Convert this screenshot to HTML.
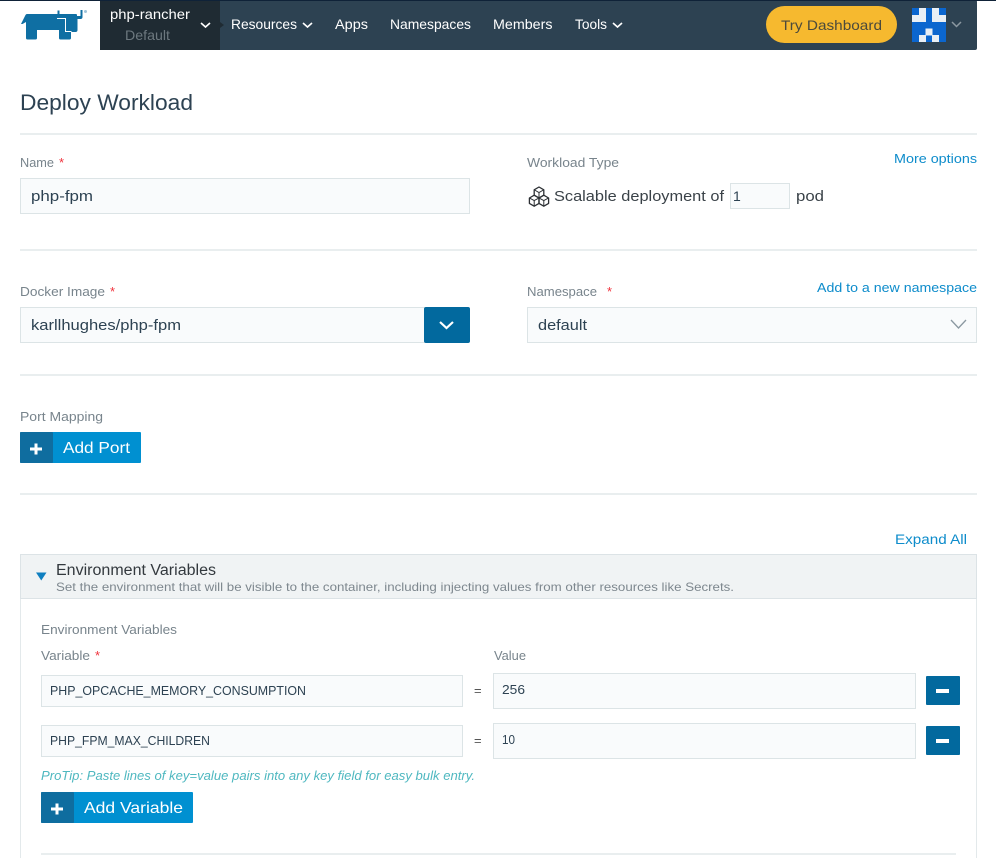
<!DOCTYPE html>
<html lang="en"><head><meta charset="utf-8"><title>Deploy Workload</title>
<style>
html,body{margin:0;padding:0;background:#fff;width:996px;height:858px;overflow:hidden}
svg{display:block}
text{font-family:"Liberation Sans",sans-serif;white-space:pre}
.lb{font-size:13px;fill:#78848c}
.in{fill:#f9fbfc;stroke:#dce4e6;stroke-width:1}
.v{font-size:15px;fill:#2d4252}
.lk{font-size:12.5px;fill:#0e8ccb}
.nav{font-size:14px;fill:#fff}
.rq{font-size:13px;fill:#f0323c}
.ln{fill:#e9eeef}
.ch{fill:none;stroke:#fff;stroke-width:1.6}
</style></head><body>
<svg width="996" height="858" viewBox="0 0 996 858" xmlns="http://www.w3.org/2000/svg">
<rect width="996" height="858" fill="#fff"/>
<!-- header -->
<rect x="100" y="0" width="877" height="50" rx="2" fill="#2d4252"/>
<rect x="0" y="0" width="996" height="1" fill="#0f2238"/>
<path d="M100 1H220L220 22L224 25L220 28V50H100Z" fill="#1f2b33"/>
<!-- logo -->
<path d="M21 24L25.500 15Q26 14 27 14H57.500V10.500H59.500V14H76Q77 14 77 15V16H80.500V10H82.500V17Q82.500 19 80.500 19H77.500V30Q77.500 32 75.500 32H71V38Q71 39.500 69.500 39.500H60.500Q59 39.500 59 38V30H37V38Q37 39.500 35.500 39.500H27.500Q26 39.500 26 38V22L22.500 24Z" fill="#0f6fa3"/>
<path d="M57 18.500H65.500V31.500H71.500" fill="none" stroke="#fff" stroke-width="1"/>
<circle cx="85.500" cy="11.500" r="1.500" fill="#9fc3d8"/>
<text x="110" y="19" class="nav" textLength="80" lengthAdjust="spacingAndGlyphs">php-rancher</text>
<text x="125" y="40" font-size="14" fill="#6d787f" textLength="45" lengthAdjust="spacingAndGlyphs">Default</text>
<path d="M201 23l4.500 4 4.500-4" class="ch"/>
<text x="231" y="29" class="nav" textLength="66" lengthAdjust="spacingAndGlyphs">Resources</text>
<path d="M303 23l4.500 4 4.500-4" class="ch"/>
<text x="335" y="29" class="nav" textLength="33" lengthAdjust="spacingAndGlyphs">Apps</text>
<text x="390" y="29" class="nav" textLength="81" lengthAdjust="spacingAndGlyphs">Namespaces</text>
<text x="493" y="29" class="nav" textLength="59.500" lengthAdjust="spacingAndGlyphs">Members</text>
<text x="575" y="29" class="nav" textLength="32" lengthAdjust="spacingAndGlyphs">Tools</text>
<path d="M613 23l4.500 4 4.500-4" class="ch"/>
<rect x="766" y="6" width="131" height="37" rx="18.500" fill="#f6b92f"/>
<text x="781" y="30" font-size="14" fill="#4b4a3c" textLength="101" lengthAdjust="spacingAndGlyphs">Try Dashboard</text>
<!-- avatar: 5x5 identicon -->
<rect x="912" y="8" width="34" height="34" fill="#0b66cf"/>
<g fill="#e9eff5">
<rect x="919" y="8" width="7" height="7"/>
<rect x="932" y="8" width="7" height="7"/>
<rect x="912" y="15" width="14" height="7"/>
<rect x="932" y="15" width="14" height="7"/>
<rect x="925.500" y="28.500" width="7" height="7"/>
<rect x="919" y="35" width="7" height="7"/>
<rect x="932" y="35" width="7" height="7"/>
</g>
<path d="M952 22l4.500 4.500 4.500-4.500" fill="none" stroke="#8b98a1" stroke-width="1.500"/>

<!-- title -->
<text x="20" y="110" font-size="22" fill="#2d4252" textLength="173" lengthAdjust="spacingAndGlyphs">Deploy Workload</text>
<rect class="ln" x="20" y="133" width="957" height="2"/>

<!-- name -->
<text x="20" y="167" class="lb" textLength="34" lengthAdjust="spacingAndGlyphs">Name</text>
<text x="59" y="167" class="rq">*</text>
<rect class="in" x="20.500" y="178.500" width="449" height="35"/>
<text x="31" y="201" class="v" textLength="62" lengthAdjust="spacingAndGlyphs">php-fpm</text>

<text x="527" y="167" class="lb" textLength="92" lengthAdjust="spacingAndGlyphs">Workload Type</text>
<text x="894" y="163" class="lk" textLength="83" lengthAdjust="spacingAndGlyphs">More options</text>
<g fill="none" stroke="#2b2f33" stroke-width="1.300" stroke-linejoin="round">
<path d="M539 187l4.800 2.800v5.400l-4.800 2.800-4.800-2.800v-5.400z"/>
<path d="M534.200 195.200l4.800 2.800v5.400l-4.800 2.800-4.800-2.800v-5.400z"/>
<path d="M543.800 195.200l4.800 2.800v5.400l-4.800 2.800-4.800-2.800v-5.400z"/>
<path d="M534.600 190l4.400 2.600 4.400-2.600M539 192.600v5.400M529.800 198.200l4.400 2.400 4.400-2.400M534.200 200.600v5M539.400 198.200l4.400 2.400 4.400-2.400M543.800 200.600v5" stroke-width="1"/>
</g>
<text x="554" y="201" font-size="15" fill="#3a4248" textLength="170" lengthAdjust="spacingAndGlyphs">Scalable deployment of</text>
<rect class="in" x="730.500" y="183.500" width="59" height="25"/>
<text x="733" y="201" font-size="14" fill="#2d4252">1</text>
<text x="796" y="201" font-size="15" fill="#3a4248" textLength="28" lengthAdjust="spacingAndGlyphs">pod</text>
<rect class="ln" x="20" y="249" width="957" height="2"/>

<!-- docker -->
<text x="20" y="296" class="lb" textLength="85" lengthAdjust="spacingAndGlyphs">Docker Image</text>
<text x="110" y="296" class="rq">*</text>
<rect class="in" x="20.500" y="307.500" width="404" height="35"/>
<text x="31" y="330" class="v" textLength="150" lengthAdjust="spacingAndGlyphs">karllhughes/php-fpm</text>
<rect x="424" y="307" width="46" height="36" rx="2" fill="#02699e"/>
<path d="M440 322l6.500 6 6.500-6" fill="none" stroke="#fff" stroke-width="2.200"/>

<text x="527" y="296" class="lb" textLength="70" lengthAdjust="spacingAndGlyphs">Namespace</text>
<text x="607" y="296" class="rq">*</text>
<text x="817" y="292" class="lk" textLength="160" lengthAdjust="spacingAndGlyphs">Add to a new namespace</text>
<rect class="in" x="527.500" y="307.500" width="449" height="35"/>
<text x="538" y="330" class="v" textLength="49" lengthAdjust="spacingAndGlyphs">default</text>
<path d="M951 320l7.500 8 7.500-8" fill="none" stroke="#8b98a1" stroke-width="1.300"/>
<rect class="ln" x="20" y="374" width="957" height="2"/>

<!-- port -->
<text x="20" y="421" class="lb" textLength="83" lengthAdjust="spacingAndGlyphs">Port Mapping</text>
<rect x="20" y="432" width="121" height="31" rx="1" fill="#0090d1"/>
<rect x="20" y="432" width="33" height="31" rx="1" fill="#0f6d9f"/>
<path d="M30 449h12M36 443.500v11" stroke="#fff" stroke-width="3"/>
<text x="63" y="453" font-size="16" fill="#fff" textLength="67" lengthAdjust="spacingAndGlyphs">Add Port</text>
<rect class="ln" x="20" y="493" width="957" height="2"/>

<text x="895" y="544" font-size="13.500" fill="#0e8ccb" textLength="72" lengthAdjust="spacingAndGlyphs">Expand All</text>

<!-- accordion -->
<rect x="20.500" y="554.500" width="956" height="320" fill="#fff" stroke="#e3e9eb"/>
<rect x="20.500" y="554.500" width="956" height="44" fill="#f0f3f4" stroke="#dce3e6"/>
<path d="M36 572.500h10.500l-5.250 8z" fill="#0f7fc0"/>
<text x="56" y="575" font-size="15.500" fill="#33393e" textLength="160" lengthAdjust="spacingAndGlyphs">Environment Variables</text>
<text x="56" y="591" font-size="12" fill="#7d878e" textLength="678" lengthAdjust="spacingAndGlyphs">Set the environment that will be visible to the container, including injecting values from other resources like Secrets.</text>

<text x="41" y="634" class="lb" textLength="136" lengthAdjust="spacingAndGlyphs">Environment Variables</text>
<text x="41" y="660" class="lb" textLength="49" lengthAdjust="spacingAndGlyphs">Variable</text>
<text x="95" y="660" class="rq">*</text>
<text x="494" y="660" class="lb" textLength="32" lengthAdjust="spacingAndGlyphs">Value</text>

<rect class="in" x="41.500" y="675.500" width="421" height="31"/>
<text x="50" y="695" font-size="12.500" fill="#2d4252" textLength="256" lengthAdjust="spacingAndGlyphs">PHP_OPCACHE_MEMORY_CONSUMPTION</text>
<text x="474" y="695" font-size="13" fill="#555">=</text>
<rect class="in" x="493.500" y="673.500" width="422" height="35"/>
<text x="502" y="694" font-size="13" fill="#2d4252" textLength="23" lengthAdjust="spacingAndGlyphs">256</text>
<rect x="926" y="676" width="34" height="29" rx="1" fill="#02699e"/>
<rect x="936" y="689" width="13" height="4" fill="#fff"/>

<rect class="in" x="41.500" y="725.500" width="421" height="31"/>
<text x="50" y="745" font-size="12.500" fill="#2d4252" textLength="160" lengthAdjust="spacingAndGlyphs">PHP_FPM_MAX_CHILDREN</text>
<text x="474" y="745" font-size="13" fill="#555">=</text>
<rect class="in" x="493.500" y="723.500" width="422" height="35"/>
<text x="502" y="744" font-size="13" fill="#2d4252" textLength="13" lengthAdjust="spacingAndGlyphs">10</text>
<rect x="926" y="726" width="34" height="29" rx="1" fill="#02699e"/>
<rect x="936" y="739" width="13" height="4" fill="#fff"/>

<text x="41" y="780" font-size="12.500" font-style="italic" fill="#4fb8c0" textLength="434" lengthAdjust="spacingAndGlyphs">ProTip: Paste lines of key=value pairs into any key field for easy bulk entry.</text>

<rect x="41" y="792" width="152" height="31" rx="1" fill="#0090d1"/>
<rect x="41" y="792" width="33" height="31" rx="1" fill="#0f6d9f"/>
<path d="M51 809h12M57 803.500v11" stroke="#fff" stroke-width="3"/>
<text x="84" y="813" font-size="16" fill="#fff" textLength="99" lengthAdjust="spacingAndGlyphs">Add Variable</text>
<rect class="ln" x="41" y="853" width="915" height="2"/>
</svg>
</body></html>
